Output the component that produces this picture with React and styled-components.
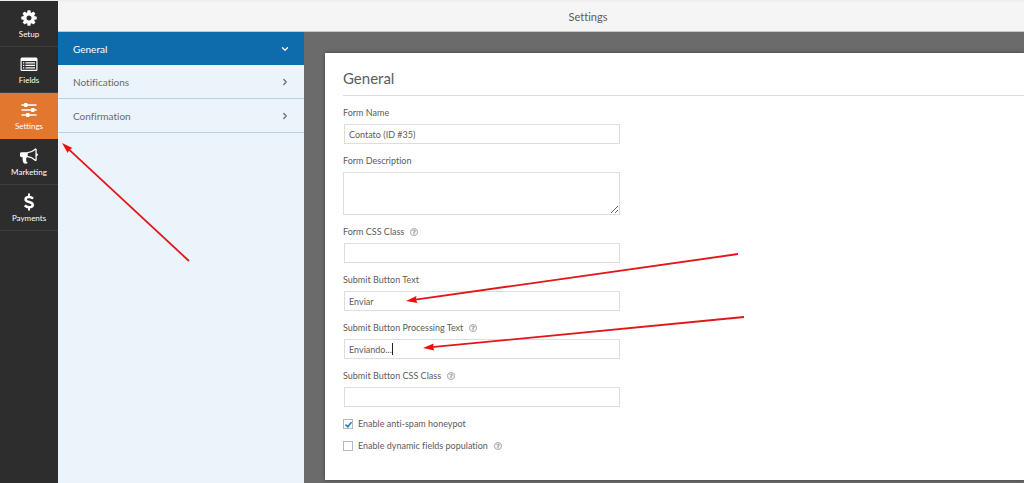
import React from 'react'
import styled, { createGlobalStyle } from 'styled-components'
import { ChevronDown, ChevronRight } from 'lucide-react'
import { FaRegQuestionCircle } from 'react-icons/fa'


const GlobalStyle = createGlobalStyle`
    *{
        box-sizing: border-box;
    }

    body{
        margin: 0;
        background-color: #2d2d2d;
        font-family: Lato, 'Noto Sans', sans-serif;
        font-variant-ligatures: none;
        color: #5c5c5c;
    }

    button, input, textarea{
        font-family: inherit;
        color: inherit;
    }
`

const Page = styled.div`
    position: relative;
    display: flex;
    min-height: 100vh;
    border-top: 1px solid #eee;
    overflow: hidden;
`

const Toolbar = styled.nav`
    width: 58px;
    flex-shrink: 0;
    background-color: #2d2d2d;
`

const ToolButton = styled.button`
    display: flex;
    flex-direction: column;
    align-items: center;
    gap: 2px;
    width: 100%;
    height: 46px;
    padding: 8px 0 0;
    border: 0;
    border-bottom: 1px solid ${props => props.$active ? '#e27730' : '#3e3e3e'};
    background-color: ${props => props.$active ? '#e27730' : 'transparent'};
    color: white;
    font-size: 8px;
    line-height: 11px;

    svg{
        width: 18px;
        height: 18px;
        fill: currentColor;
    }
`

const Main = styled.div`
    flex: 1;
    min-width: 0;
    display: flex;
    flex-direction: column;
`

const Header = styled.header`
    height: 31px;
    padding-left: 94px;
    background-color: #f5f5f5;
    border-top: 1px solid #f0f0f0;
    border-bottom: 1px solid #c8c8c8;
    font-size: 11px;
    line-height: 29px;
    text-align: center;
`

const Body = styled.div`
    flex: 1;
    display: flex;
`

const Sections = styled.aside`
    width: 246px;
    flex-shrink: 0;
    background-color: #ebf3fb;
`

const SectionLink = styled.a`
    display: flex;
    align-items: center;
    justify-content: space-between;
    height: ${props => props.$active ? '33px' : '34px'};
    padding: 0 14px 0 15px;
    border-bottom: ${props => props.$active ? '0' : '1px solid #bccfdd'};
    background-color: ${props => props.$active ? '#0e6cad' : 'transparent'};
    color: ${props => props.$active ? 'white' : '#6b6b6b'};
    font-size: 10px;
    text-decoration: none;
`

const Content = styled.main`
    flex: 1;
    min-width: 0;
    padding: 21px 0 3px 21px;
    background-color: #6b6b6b;
`

const Card = styled.form`
    min-height: 100%;
    padding: 16px 0 18px 18px;
    background-color: white;
    box-shadow: 0 0 4px rgba(0, 0, 0, 0.4);
`

const Title = styled.h1`
    margin: 0 0 11px;
    padding-bottom: 7px;
    border-bottom: 1px solid #ddd;
    font-size: 15px;
    font-weight: 400;
    line-height: 19px;
`

const Field = styled.div`
    width: 277px;
    margin-bottom: 11px;
`

const LabelRow = styled.div`
    display: flex;
    align-items: center;
    gap: 6px;
    height: 12px;
    margin-bottom: 5px;
    font-size: 9px;
    line-height: 12px;
`

const InputWrap = styled.div`
    position: relative;
    display: flex;
    padding-left: 1px;
`

const TextInput = styled.input`
    width: 100%;
    height: 20px;
    padding: 0 4px;
    border: 1px solid #ddd;
    border-radius: 0;
    background-color: white;
    font-size: 9px;
    outline: none;
`

const TextBox = styled.textarea`
    display: block;
    width: 100%;
    height: 43px;
    border: 1px solid #ddd;
    border-radius: 0;
    background-color: white;
    font-size: 9px;
    resize: both;
`

const Caret = styled.span`
    position: absolute;
    top: 4px;
    left: 49px;
    width: 1px;
    height: 12px;
    background-color: #222;
`

const HelpIcon = styled(FaRegQuestionCircle)`
    width: 8px;
    height: 8px;
    color: #aaa;
    stroke: currentColor;
    stroke-width: 20px;
`

const CheckRow = styled.div`
    display: flex;
    align-items: center;
    gap: 6px;
    height: 12px;
    margin-bottom: 10px;
    font-size: 9px;
    line-height: 12px;

    label{
        display: flex;
        align-items: center;
        gap: 5px;
    }
`

const Check = styled.input`
    appearance: none;
    display: grid;
    place-items: center;
    width: 10px;
    height: 10px;
    margin: 0;
    border: 1px solid #b4b9be;
    background-color: white;

    &:checked::before{
        content: '';
        width: 3px;
        height: 6px;
        margin-bottom: 2px;
        border: solid #1e7bb8;
        border-width: 0 2px 2px 0;
        box-sizing: content-box;
        transform: rotate(40deg) scale(0.8);
    }
`

const Arrows = styled.svg`
    position: absolute;
    top: -1px;
    left: 0;
    pointer-events: none;
`


const GearIcon = () => (
    <svg viewBox="0 0 1792 1792">
        <path d="M1152 896q0-106-75-181t-181-75-181 75-75 181 75 181 181 75 181-75 75-181zm512-109v222q0 12-8 23t-20 13l-185 28q-19 54-39 91 35 50 107 138 10 12 10 25t-9 23q-27 37-99 108t-94 71q-12 0-26-9l-138-108q-44 23-91 38-16 136-29 186-7 28-36 28h-222q-14 0-24.5-8.5t-11.5-21.5l-28-184q-49-16-90-37l-141 107q-10 9-25 9-14 0-25-11-126-114-165-168-7-10-7-23 0-12 8-23 15-21 51-66.5t54-70.5q-27-50-41-99l-183-27q-13-2-21-12.5t-8-23.5v-222q0-12 8-23t19-13l186-28q14-46 39-92-40-57-107-138-10-12-10-24 0-10 9-23 26-36 98.5-107.5t94.5-71.5q13 0 26 10l138 107q44-23 91-38 16-136 29-186 7-28 36-28h222q14 0 24.5 8.5t11.5 21.5l28 184q49 16 90 37l142-107q9-9 24-9 13 0 25 10 129 119 165 170 7 8 7 22 0 12-8 23-15 21-51 66.5t-54 70.5q26 50 41 98l183 28q13 2 21 12.5t8 23.5z" />
    </svg>
)

const ListIcon = () => (
    <svg viewBox="0 0 18 18">
        <path fillRule="evenodd" d="M2 2.500h14a1.500 1.500 0 0 1 1.500 1.500v10.500a1.500 1.500 0 0 1-1.500 1.500h-14a1.500 1.500 0 0 1-1.500-1.500v-10.500a1.500 1.500 0 0 1 1.500-1.500zM1.700 6v8.200c0 .4.200.6.600.6h13.400c.4 0 .6-.2.600-.6v-8.200z" />
        <path d="M3 7.200h1.300v1.300h-1.300zM5.500 7.200h9.500v1.300h-9.500zM3 9.700h1.300v1.300h-1.300zM5.500 9.700h9.500v1.300h-9.500zM3 12.200h1.300v1.300h-1.300zM5.500 12.200h9.500v1.300h-9.500z" />
    </svg>
)

const SlidersIcon = () => (
    <svg viewBox="0 0 18 18">
        <path d="M1.500 3.200h15v1.600h-15zM1.500 8.200h15v1.600h-15zM1.500 13.200h15v1.600h-15z" />
        <rect x="4" y="2" width="3.500" height="4" rx="0.700" />
        <rect x="11" y="7" width="3.500" height="4" rx="0.700" />
        <rect x="6" y="12" width="3.500" height="4" rx="0.700" />
    </svg>
)

const HornIcon = () => (
    <svg viewBox="0 0 1792 1792">
        <path d="M1664 640q53 0 90.500 37.500t37.500 90.500-37.500 90.500-90.500 37.500v384q0 52-38 90t-90 38q-417-347-812-380-58 19-91 66t-31 100.500 40 92.500q-20 33-23 65.500t6 58 33.500 55 48 50 61.500 50.500q-29 58-111.500 83t-168.500 11.500-132-55.500q-7-23-29.500-87.500t-32-94.500-23-89-15-101 3.500-98.500 22-110.500h-122q-66 0-113-47t-47-113v-192q0-66 47-113t113-47h480q435 0 896-384 52 0 90 38t38 90v384zm-128 604v-954q-394 302-768 343v270q377 42 768 341z" />
    </svg>
)

const DollarIcon = () => (
    <svg viewBox="0 0 18 18">
        <path fill="none" stroke="currentColor" strokeWidth="2.500" d="M13 5.700c-1.100-1.100-2.500-1.600-4-1.600-2.100 0-3.400 1-3.400 2.300 0 3.400 7.200 1.700 7.200 5.300 0 1.600-1.500 2.500-3.700 2.500-1.700 0-3.200-.6-4.300-1.800" />
        <path d="M8 .5h2v3.500h-2zM8 14h2v3.500h-2z" />
    </svg>
)


const tools = [
    { name: 'Setup', icon: <GearIcon /> },
    { name: 'Fields', icon: <ListIcon /> },
    { name: 'Settings', icon: <SlidersIcon />, active: true },
    { name: 'Marketing', icon: <HornIcon /> },
    { name: 'Payments', icon: <DollarIcon /> },
]

// tail and tip of every red arrow
const arrows = [
    [189, 261, 62, 143],
    [738, 254, 406, 301],
    [744, 317, 423, 348],
]


function TextField({ id, label, value, help, caret }) {
    return (
        <Field>
            <LabelRow>
                <label htmlFor={id}>{label}</label>
                {help && <HelpIcon />}
            </LabelRow>
            <InputWrap>
                <TextInput id={id} type='text' defaultValue={value} />
                {caret && <Caret />}
            </InputWrap>
        </Field>
    )
}

function Arrow({ points }) {
    const [x1, y1, x2, y2] = points
    const angle = Math.atan2(y2 - y1, x2 - x1) * 180 / Math.PI
    const length = Math.hypot(x2 - x1, y2 - y1)

    return (
        <g transform={`translate(${x2} ${y2}) rotate(${angle})`}>
            <line x1={-length} y1="0" x2="-6" y2="0" stroke="#e3161b" strokeWidth="1.800" />
            <path d="M0 0L-11 -3.500L-10 0L-11 3.500z" fill="#f00c0c" />
        </g>
    )
}

function App() {
    return (
        <Page>
            <GlobalStyle />

            <Toolbar>
                {tools.map(tool => (
                    <ToolButton key={tool.name} type='button' $active={tool.active}>
                        {tool.icon}
                        {tool.name}
                    </ToolButton>
                ))}
            </Toolbar>

            <Main>
                <Header>Settings</Header>

                <Body>
                    <Sections>
                        <SectionLink href='#general' $active>
                            General
                            <ChevronDown size={10} strokeWidth={3} />
                        </SectionLink>
                        <SectionLink href='#notifications'>
                            Notifications
                            <ChevronRight size={10} strokeWidth={3} />
                        </SectionLink>
                        <SectionLink href='#confirmation'>
                            Confirmation
                            <ChevronRight size={10} strokeWidth={3} />
                        </SectionLink>
                    </Sections>

                    <Content>
                        <Card>
                            <Title>General</Title>

                            <TextField id='form-name' label='Form Name' value='Contato (ID #35)' />
                            <Field>
                                <LabelRow>
                                    <label htmlFor='form-desc'>Form Description</label>
                                </LabelRow>
                                <TextBox id='form-desc' />
                            </Field>
                            <TextField id='form-class' label='Form CSS Class' help />
                            <TextField id='submit-text' label='Submit Button Text' value='Enviar' />
                            <TextField id='processing-text' label='Submit Button Processing Text' value='Enviando...' help caret />
                            <TextField id='submit-class' label='Submit Button CSS Class' help />

                            <CheckRow>
                                <label>
                                    <Check type='checkbox' defaultChecked />
                                    Enable anti-spam honeypot
                                </label>
                            </CheckRow>
                            <CheckRow>
                                <label>
                                    <Check type='checkbox' />
                                    Enable dynamic fields population
                                </label>
                                <HelpIcon />
                            </CheckRow>
                        </Card>
                    </Content>
                </Body>
            </Main>

            <Arrows width="1024" height="483" viewBox="0 0 1024 483">
                {arrows.map((points, i) => <Arrow key={i} points={points} />)}
            </Arrows>
        </Page>
    )
}

export default App
